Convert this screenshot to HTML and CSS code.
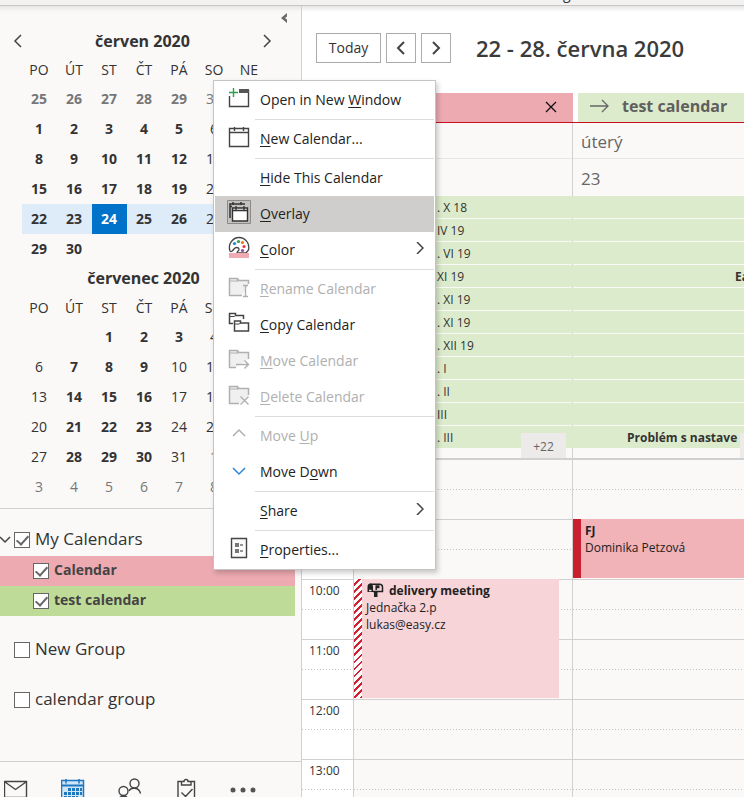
FILE: index.html
```html
<!DOCTYPE html>
<html lang="en">
<head>
<meta charset="utf-8">
<meta name="viewport" content="width=device-width, initial-scale=1">
<title>Calendar</title>
<link rel="stylesheet" href="styles.css">
</head>
<body>
<header class="ribbon"><span class="ribbon-label">g</span></header>
<div class="app">
  <aside class="sidebar">
    <div class="collapse-row">
      <button class="plain collapse" aria-label="Collapse"><svg width="8" height="10" viewBox="0 0 8 10"><path d="M7 0v3.500L5 5l2 1.500V10L1 5z" fill="#6a6a6a"/></svg></button>
    </div>
    <section class="month">
      <div class="month-title">
        <button class="plain" aria-label="Previous month"><svg width="10" height="14" viewBox="0 0 10 14"><path d="M8 1L2 7l6 6" class="ln"/></svg></button>
        <h2>červen 2020</h2>
        <button class="plain" aria-label="Next month"><svg width="10" height="14" viewBox="0 0 10 14"><path d="M2 1l6 6-6 6" class="ln"/></svg></button>
      </div>
      <table class="days">
        <thead><tr><th>PO</th><th>ÚT</th><th>ST</th><th>ČT</th><th>PÁ</th><th>SO</th><th>NE</th></tr></thead>
        <tbody>
          <tr class="out"><td><b>25</b></td><td><b>26</b></td><td><b>27</b></td><td><b>28</b></td><td><b>29</b></td><td>30</td><td></td></tr>
          <tr><td><b>1</b></td><td><b>2</b></td><td><b>3</b></td><td><b>4</b></td><td><b>5</b></td><td>6</td><td></td></tr>
          <tr><td><b>8</b></td><td><b>9</b></td><td><b>10</b></td><td><b>11</b></td><td><b>12</b></td><td>13</td><td></td></tr>
          <tr><td><b>15</b></td><td><b>16</b></td><td><b>17</b></td><td><b>18</b></td><td><b>19</b></td><td>20</td><td></td></tr>
          <tr class="week"><td><b>22</b></td><td><b>23</b></td><td class="today"><b>24</b></td><td><b>25</b></td><td><b>26</b></td><td>27</td><td></td></tr>
          <tr><td><b>29</b></td><td><b>30</b></td><td></td><td></td><td></td><td></td><td></td></tr>
        </tbody>
      </table>
    </section>
    <section class="month">
      <div class="month-title single"><h2>červenec 2020</h2></div>
      <table class="days">
        <thead><tr><th>PO</th><th>ÚT</th><th>ST</th><th>ČT</th><th>PÁ</th><th>SO</th><th></th></tr></thead>
        <tbody>
          <tr><td></td><td></td><td><b>1</b></td><td><b>2</b></td><td><b>3</b></td><td>4</td><td></td></tr>
          <tr><td>6</td><td><b>7</b></td><td><b>8</b></td><td><b>9</b></td><td>10</td><td>11</td><td></td></tr>
          <tr><td>13</td><td><b>14</b></td><td><b>15</b></td><td><b>16</b></td><td>17</td><td>18</td><td></td></tr>
          <tr><td>20</td><td><b>21</b></td><td><b>22</b></td><td><b>23</b></td><td>24</td><td>25</td><td></td></tr>
          <tr><td>27</td><td><b>28</b></td><td><b>29</b></td><td><b>30</b></td><td>31</td><td class="other">1</td><td></td></tr>
          <tr class="out"><td>3</td><td>4</td><td>5</td><td>6</td><td>7</td><td>8</td><td></td></tr>
        </tbody>
      </table>
    </section>
    <section class="groups">
      <div class="group">
        <button class="plain expander" aria-label="Collapse group"><svg width="12" height="8" viewBox="0 0 12 8"><path d="M0 1l5 5 5-5" class="ln"/></svg></button>
        <label><input type="checkbox" checked><span>My Calendars</span></label>
      </div>
      <label class="cal red"><input type="checkbox" checked><span>Calendar</span></label>
      <label class="cal green"><input type="checkbox" checked><span>test calendar</span></label>
      <div class="group later"><label><input type="checkbox"><span>New Group</span></label></div>
      <div class="group later"><label><input type="checkbox"><span>calendar group</span></label></div>
    </section>
    <nav class="modules">
      <a href="#mail" aria-label="Mail"><svg width="24" height="22" viewBox="0 0 24 22"><path d="M.500 3.500h22v16H.500zM1 4l10.500 7.500L22 4" fill="none" stroke="#444" stroke-width="1.400"/></svg></a>
      <a href="#calendar" aria-label="Calendar"><svg width="24" height="22" viewBox="0 0 24 22"><path d="M.500 2.500h22V22H.500z" fill="#cfe5f8" stroke="#1f77c0" stroke-width="1.500"/><path d="M1 7.500h21" stroke="#1f77c0" stroke-width="2"/><path d="M5 1v4.500M18 1v4.500" stroke="#1f77c0" stroke-width="1.500"/><path d="M7 11.500h14M3 15.500h18M3 19.500h14" stroke="#1f77c0" stroke-width="3" stroke-dasharray="3 1"/></svg></a>
      <a href="#people" aria-label="People"><svg width="24" height="22" viewBox="0 0 24 22"><g fill="none" stroke="#444" stroke-width="1.400"><circle cx="16.500" cy="5.500" r="4.500"/><circle cx="5.500" cy="13" r="4.500"/><path d="M11 13c2-4 10-4 11.500 2.500M0 22c2-5 9-5 11 0"/></g></svg></a>
      <a href="#tasks" aria-label="Tasks"><svg width="22" height="22" viewBox="0 0 22 22"><path d="M6.500 3.500H3V22M16 3.500h3.500V22M6.500 3.500h2.500a2 2 0 0 1 4 0h3V7h-9.500zM6.500 14.500l4 4 7-7.500" fill="none" stroke="#444" stroke-width="1.400"/></svg></a>
      <button class="plain" aria-label="More"><svg width="26" height="22" viewBox="0 0 26 22"><g fill="#555"><circle cx="3" cy="12" r="2.500"/><circle cx="13" cy="12" r="2.500"/><circle cx="23" cy="12" r="2.500"/></g></svg></button>
    </nav>
  </aside>

  <main class="main">
    <div class="toolbar">
      <button class="tool today-btn">Today</button>
      <button class="tool" aria-label="Back"><svg width="10" height="14" viewBox="0 0 10 14"><path d="M8 1L2 7l6 6" class="ln bold"/></svg></button>
      <button class="tool" aria-label="Forward"><svg width="10" height="14" viewBox="0 0 10 14"><path d="M2 1l6 6-6 6" class="ln bold"/></svg></button>
      <h1>22 - 28. června 2020</h1>
    </div>
    <div class="tabs">
      <div class="tab red"><button class="plain" aria-label="Close"><svg width="12" height="12" viewBox="0 0 12 12"><path d="M1 1l10 10M11 1L1 11" stroke="#111" stroke-width="1.300"/></svg></button></div>
      <div class="tab pale"><svg width="20" height="14" viewBox="0 0 20 14"><path d="M0 7h18M12 1l6 6-6 6" fill="none" stroke="#666" stroke-width="1.300"/></svg><span>test calendar</span></div>
    </div>
    <div class="heads">
      <div class="head"></div>
      <div class="head rule"></div>
      <div class="head"><span>úterý</span><span>23</span></div>
    </div>
    <div class="allday">
      <div class="bar"><span>. X 18</span></div>
      <div class="bar"><span>IV 19</span></div>
      <div class="bar"><span>. VI 19</span></div>
      <div class="bar"><span class="far">XI 19</span><b>Ea</b></div>
      <div class="bar"><span>. XI 19</span></div>
      <div class="bar"><span>. XI 19</span></div>
      <div class="bar"><span>. XII 19</span></div>
      <div class="bar"><span>. I</span></div>
      <div class="bar"><span>. II</span></div>
      <div class="bar"><span>III</span></div>
      <div class="bar"><span class="near">. III</span><b>Problém s nastave</b></div>
      <button class="more">+22</button>
      <span class="more edge"></span>
    </div>
    <div class="grid">
      <div class="gutter">
        <div class="hour"></div><div class="hour"></div><div class="hour">10:00</div><div class="hour">11:00</div><div class="hour">12:00</div><div class="hour">13:00</div>
      </div>
      <div class="day">
        <div class="hour"></div><div class="hour"></div><div class="hour"></div><div class="hour"></div><div class="hour"></div><div class="hour"></div>
        <article class="event tentative">
          <h3><svg width="18" height="16" viewBox="0 0 18 16"><path d="M1.500 10V5q0-3.500 2.700-3.500T7 5v5z" fill="#222"/><path d="M4 2.200h9.500q3 0 3 3V9.500H7" fill="none" stroke="#222" stroke-width="1.500"/><path d="M3 8.500h2.500" stroke="#f7d4d7" stroke-width="1.500"/><path d="M10.200 8V4h2.500v1.500h-2" fill="none" stroke="#222" stroke-width="1.500"/><path d="M8 10h3.500v5H8z" fill="#222"/></svg>delivery meeting</h3>
          <p>Jednačka 2.p</p>
          <p>lukas@easy.cz</p>
        </article>
      </div>
      <div class="day">
        <div class="hour"></div><div class="hour"></div><div class="hour"></div><div class="hour"></div><div class="hour"></div><div class="hour"></div>
        <article class="event busy">
          <h3>FJ</h3>
          <p>Dominika Petzová</p>
        </article>
      </div>
    </div>
  </main>
</div>

<div class="menu" role="menu">
  <button role="menuitem"><svg viewBox="0 0 24 24"><path d="M2.500 10v10.500h19V4" fill="none" stroke="#444" stroke-width="1.400"/><path d="M12 3h10v4H12z" fill="#555"/><path d="M6.500 2v9M2 6.500h9" stroke="#2f9e4f" stroke-width="1.400"/></svg><span>Open in New <u>W</u>indow</span></button>
  <hr>
  <button role="menuitem"><svg viewBox="0 0 24 24"><path d="M2.500 3.500h19v18h-19zM2.500 7.500h19M7.500 2v4M16.500 2v4" fill="none" stroke="#444" stroke-width="1.400"/></svg><span><u>N</u>ew Calendar...</span></button>
  <hr>
  <button role="menuitem"><svg viewBox="0 0 24 24"></svg><span><u>H</u>ide This Calendar</span></button>
  <button role="menuitem" class="active"><svg viewBox="0 0 24 24"><path d="M.500.500h23v23H.500z" fill="#c4c2c0" stroke="#8c8a88"/><path d="M3 18V4h15M6 2v3M14 2v3M3 6.500h2" fill="none" stroke="#333" stroke-width="1.500"/><path d="M5.500 8h15v13h-15z" fill="#fff" stroke="#333" stroke-width="1.400"/><path d="M5.500 10.500h15M9 6v4M17 6v4" stroke="#333" stroke-width="1.300"/></svg><span><u>O</u>verlay</span></button>
  <button role="menuitem"><svg viewBox="0 0 24 24"><path d="M3 15C.500 8 6 1.500 12 1.500S23 7 21.500 14L19 17h-9c0-2 2.500-2 2-4s-3.500-2-5 0-3 3.500-4 2z" fill="#fff" stroke="#444" stroke-width="1.300"/><circle cx="7.500" cy="7.500" r="1.600" fill="#1e88d2"/><circle cx="11.500" cy="5.500" r="1.600" fill="#3a9c4c"/><circle cx="15.500" cy="6.500" r="1.600" fill="#e87817"/><circle cx="17" cy="10.500" r="1.600" fill="#e8383d"/><circle cx="15.500" cy="14.500" r="1.600" fill="#9448a8"/><path d="M2 17h20v5H2z" fill="#eeabb2"/></svg><span><u>C</u>olor</span><svg class="sub" viewBox="0 0 8 12"><path d="M1 0l6 6-6 6" class="ln"/></svg></button>
  <hr>
  <button role="menuitem" disabled><svg viewBox="0 0 24 24"><path d="M15 20.500H2.500v-17h8v2h11V9" fill="#f0f0f0" stroke="#b0b0b0" stroke-width="1.500"/><path d="M3 6h8l1-2" fill="none" stroke="#b0b0b0"/><path d="M16 10.500h5M16 21.500h5M18.500 10.500v11" stroke="#b0b0b0" stroke-width="1.400"/></svg><span><u>R</u>ename Calendar</span></button>
  <button role="menuitem"><svg viewBox="0 0 24 24"><path d="M6 12.500H2.500v-10h6v2h8V8" fill="none" stroke="#444" stroke-width="1.500"/><path d="M2.500 5.500h5l1-1" fill="none" stroke="#444"/><path d="M7.500 20v-10h6v2h8v8z" fill="#fff" stroke="#444" stroke-width="1.500"/><path d="M7.500 13h5l1-1" fill="none" stroke="#444"/></svg><span><u>C</u>opy Calendar</span></button>
  <button role="menuitem" disabled><svg viewBox="0 0 24 24"><path d="M9 20.500H2.500v-17h8v2h11V12" fill="#f0f0f0" stroke="#b0b0b0" stroke-width="1.500"/><path d="M3 6h8l1-2" fill="none" stroke="#b0b0b0"/><path d="M9 17.500h12M17.500 13.500l4 4-4 4" fill="none" stroke="#b0b0b0" stroke-width="1.400"/></svg><span><u>M</u>ove Calendar</span></button>
  <button role="menuitem" disabled><svg viewBox="0 0 24 24"><path d="M12 20.500H2.500v-17h8v2h11V12" fill="#f0f0f0" stroke="#b0b0b0" stroke-width="1.500"/><path d="M3 6h8l1-2" fill="none" stroke="#b0b0b0"/><path d="M13.500 13.500l8 8M21.500 13.500l-8 8" fill="none" stroke="#b0b0b0" stroke-width="1.400"/></svg><span><u>D</u>elete Calendar</span></button>
  <hr>
  <button role="menuitem" disabled><svg viewBox="0 0 24 24"><path d="M6 14l6-6 6 6" fill="none" stroke="#b0b0b0" stroke-width="1.500"/></svg><span>Move <u>U</u>p</span></button>
  <button role="menuitem"><svg viewBox="0 0 24 24"><path d="M6 10l6 6 6-6" fill="none" stroke="#2b88d8" stroke-width="1.500"/></svg><span>Move D<u>o</u>wn</span></button>
  <hr>
  <button role="menuitem"><svg viewBox="0 0 24 24"></svg><span><u>S</u>hare</span><svg class="sub" viewBox="0 0 8 12"><path d="M1 0l6 6-6 6" class="ln"/></svg></button>
  <hr>
  <button role="menuitem"><svg viewBox="0 0 24 24"><path d="M4.500 2.500h15v19h-15z" fill="#fafafa" stroke="#444" stroke-width="1.400"/><path d="M8 7h4v4H8zM8 13h4v4H8z" fill="#777"/><path d="M13 9h3M13 15h3" stroke="#777" stroke-width="1.400"/></svg><span><u>P</u>roperties...</span></button>
</div>
</body>
</html>
```
FILE: styles.css
```css
:root {
  --line: #d0d0d0;
  --pane: #faf9f8;
  --text: #333;
  --red: #edaab1;
  --green: #bfdb98;
  --pale: #dcebcb;
  --cols: 52px 219px 1fr;
}
* { box-sizing: border-box; }
body {
  margin: 0;
  height: 100vh;
  display: flex;
  flex-direction: column;
  overflow: hidden;
  background: #fff;
  color: var(--text);
  font: 14px/20px "Open Sans", "Noto Sans", sans-serif;
}
h1, h2, h3, p { margin: 0; }
button { font: inherit; color: inherit; cursor: pointer; }
svg { display: block; flex: none; }
.ln { fill: none; stroke: #444; stroke-width: 1.5; }
.plain { border: 0; padding: 0; background: none; display: flex; }

.ribbon {
  flex: none;
  height: 6px;
  overflow: hidden;
  background: #f3f2f1;
  border-bottom: 1px solid #c8c6c4;
  display: flex;
  align-items: flex-end;
  padding-left: 563px;
}
.ribbon-label { line-height: 18px; height: 20px; }
.app {
  flex: 1;
  min-height: 0;
  display: flex;
  background: linear-gradient(#e6e6e6, transparent 6px);
}

.sidebar {
  flex: none;
  width: 302px;
  display: flex;
  flex-direction: column;
  background: linear-gradient(#e6e6e6, var(--pane) 6px);
  border-right: 1px solid var(--line);
}
.collapse-row { height: 20px; display: flex; justify-content: flex-end; align-items: center; padding: 4px 13px 0 0; }
.month { padding: 0 0 0 22px; }
.month-title { height: 30px; display: flex; align-items: center; justify-content: space-between; margin: 0 29px 0 -9px; }
.month-title.single { justify-content: center; margin-right: 27px; padding-bottom: 2px; }
h2 { font-size: 16px; font-weight: 700; }
.days { border-collapse: collapse; table-layout: fixed; width: 245px; }
.days th { height: 28px; }
.days td { height: 30px; }
.days th, .days td { padding: 0 1px 0 0; font-weight: 400; text-align: center; }
.out, .other { color: #777; }
.week { background: #deebf9; }
.today { background: #0072c9; color: #fff; }

.groups { margin-top: 6px; padding-top: 15px; border-top: 1px solid var(--line); }
.group { height: 32px; display: flex; align-items: center; padding-left: 14px; font-size: 17px; }
.group .expander { margin-left: -14px; width: 14px; }
.group.later { margin-top: 18px; }
label { display: flex; align-items: center; gap: 5px; }
label span { padding-bottom: 2px; }
.cal { height: 30px; margin-right: 6px; padding-left: 33px; font-weight: 700; color: #444; }
.cal.red, .tab.red { background: var(--red); }
.cal.green { background: var(--green); }
input {
  appearance: none;
  width: 16px;
  height: 16px;
  margin: 0;
  border: 1px solid #666;
  background: #fff;
  display: grid;
  place-items: center;
}
input:checked::before {
  content: "";
  width: 5px;
  height: 10px;
  margin-top: -3px;
  border: solid #666;
  border-width: 0 2px 2px 0;
  transform: rotate(42deg);
}
.modules { margin-top: auto; height: 36px; flex: none; display: flex; gap: 33px; padding: 16px 0 0 4px; border-top: 1px solid var(--line); overflow: hidden; }

.main { flex: 1; min-width: 0; display: flex; flex-direction: column; }
.toolbar { display: flex; align-items: center; gap: 5px; padding: 27px 0 30px 14px; flex: none; }
.tool { width: 30px; height: 30px; padding: 0; background: #fff; border: 1px solid #ababab; display: flex; align-items: center; justify-content: center; }
.today-btn { width: 65px; }
.ln.bold { stroke-width: 2; }
h1 { margin-left: 20px; font-size: 22px; line-height: 30px; font-weight: 600; color: #3b3b3b; white-space: nowrap; }
.tabs { flex: none; display: grid; grid-template-columns: 271px 1fr; gap: 5px; border-bottom: 1px solid #c50f1f; }
.tab { height: 29px; display: flex; align-items: center; padding: 0 16px 3px 12px; }
.tab.red { justify-content: flex-end; padding: 0 16px 2px 0; }
.tab.pale { background: var(--pale); gap: 12px; font-size: 16px; font-weight: 700; color: #5f5f5f; }
.heads { flex: none; display: grid; grid-template-columns: var(--cols); background: linear-gradient(#e6e6e6, #e6e6e6) 0 35px / 100% 1px no-repeat var(--pane); }
.head { height: 73px; padding-left: 8px; font-size: 17px; color: #666; }
.head span { display: block; line-height: 38px; }
.head span + span { line-height: 35px; }
.rule { border-right: 1px solid var(--line); }

.allday {
  flex: none;
  position: relative;
  overflow: hidden;
  padding-bottom: 9px;
  border-bottom: 1px solid var(--line);
  background: linear-gradient(var(--line), var(--line)) 270px 0 / 1px 100% no-repeat var(--pane);
  font-size: 12px;
}
.bar { height: 22px; margin-bottom: 1px; padding-left: 135px; display: flex; background: var(--pale); line-height: 24px; white-space: nowrap; }
.bar .far { flex: 0 0 298px; }
.bar .near { flex: 0 0 190px; }
.more { position: absolute; left: 219px; bottom: 0; width: 45px; height: 25px; padding: 2px 0 0; border: 0; background: #edebe9; color: #666; }
.more.edge { left: 438px; }

.grid { flex: 1; min-height: 0; overflow: hidden; display: grid; grid-template-columns: var(--cols); background: var(--pane); }
.gutter, .day { display: grid; grid-template-columns: minmax(0, 1fr); grid-auto-rows: 60px; border-right: 1px solid var(--line); }
.gutter { background: #fff; }
.day:last-child { border-right: 0; }
.hour {
  grid-column: 1;
  border-top: 1px solid var(--line);
  padding-left: 7px;
  font-size: 12px;
  line-height: 22px;
  background: repeating-linear-gradient(90deg, #c4c4c4 0 1px, transparent 1px 3px) 0 29px / 100% 1px no-repeat;
}
.hour:nth-child(1) { grid-row: 1; }
.hour:nth-child(2) { grid-row: 2; }
.hour:nth-child(3) { grid-row: 3; }
.hour:nth-child(4) { grid-row: 4; }
.hour:nth-child(5) { grid-row: 5; }
.hour:nth-child(6) { grid-row: 6; }
.event { grid-column: 1; padding: 3px 0 0 12px; margin-bottom: 1px; font-size: 12px; line-height: 17px; color: #222; white-space: nowrap; z-index: 1; }
h3 { display: flex; gap: 5px; font-size: 12px; font-weight: 700; }
.tentative {
  grid-row: 3 / span 2;
  margin-right: 13px;
  background:
    repeating-linear-gradient(135deg, #fff 0 3px, #cf2233 3px 5px) 0 0 / 8px 100% no-repeat,
    #f7d4d7;
}
.busy { grid-row: 2; background: #f1b2b8; border-left: 8px solid #c9202f; padding-left: 4px; }

.menu {
  position: absolute;
  left: 213px;
  top: 80px;
  width: 223px;
  padding: 1px;
  background: #fff;
  border: 1px solid #c4c4c4;
  box-shadow: 2px 3px 5px rgba(0, 0, 0, .2);
  color: #222;
  z-index: 5;
}
.menu button { width: 100%; height: 36px; padding: 0 10px 0 12px; border: 0; background: none; display: flex; align-items: center; gap: 9px; text-align: left; white-space: nowrap; }
.menu button svg { width: 24px; height: 24px; margin-bottom: 4px; }
.menu button .sub { width: 8px; height: 12px; margin-left: auto; }
.menu .active { background: #d0cecc; }
.menu button:disabled { color: #b0b0b0; }
.menu hr { height: 1px; margin: 1px 0 1px 40px; border: 0; background: #dcdcdc; }
u { text-underline-offset: 2px; }
```
